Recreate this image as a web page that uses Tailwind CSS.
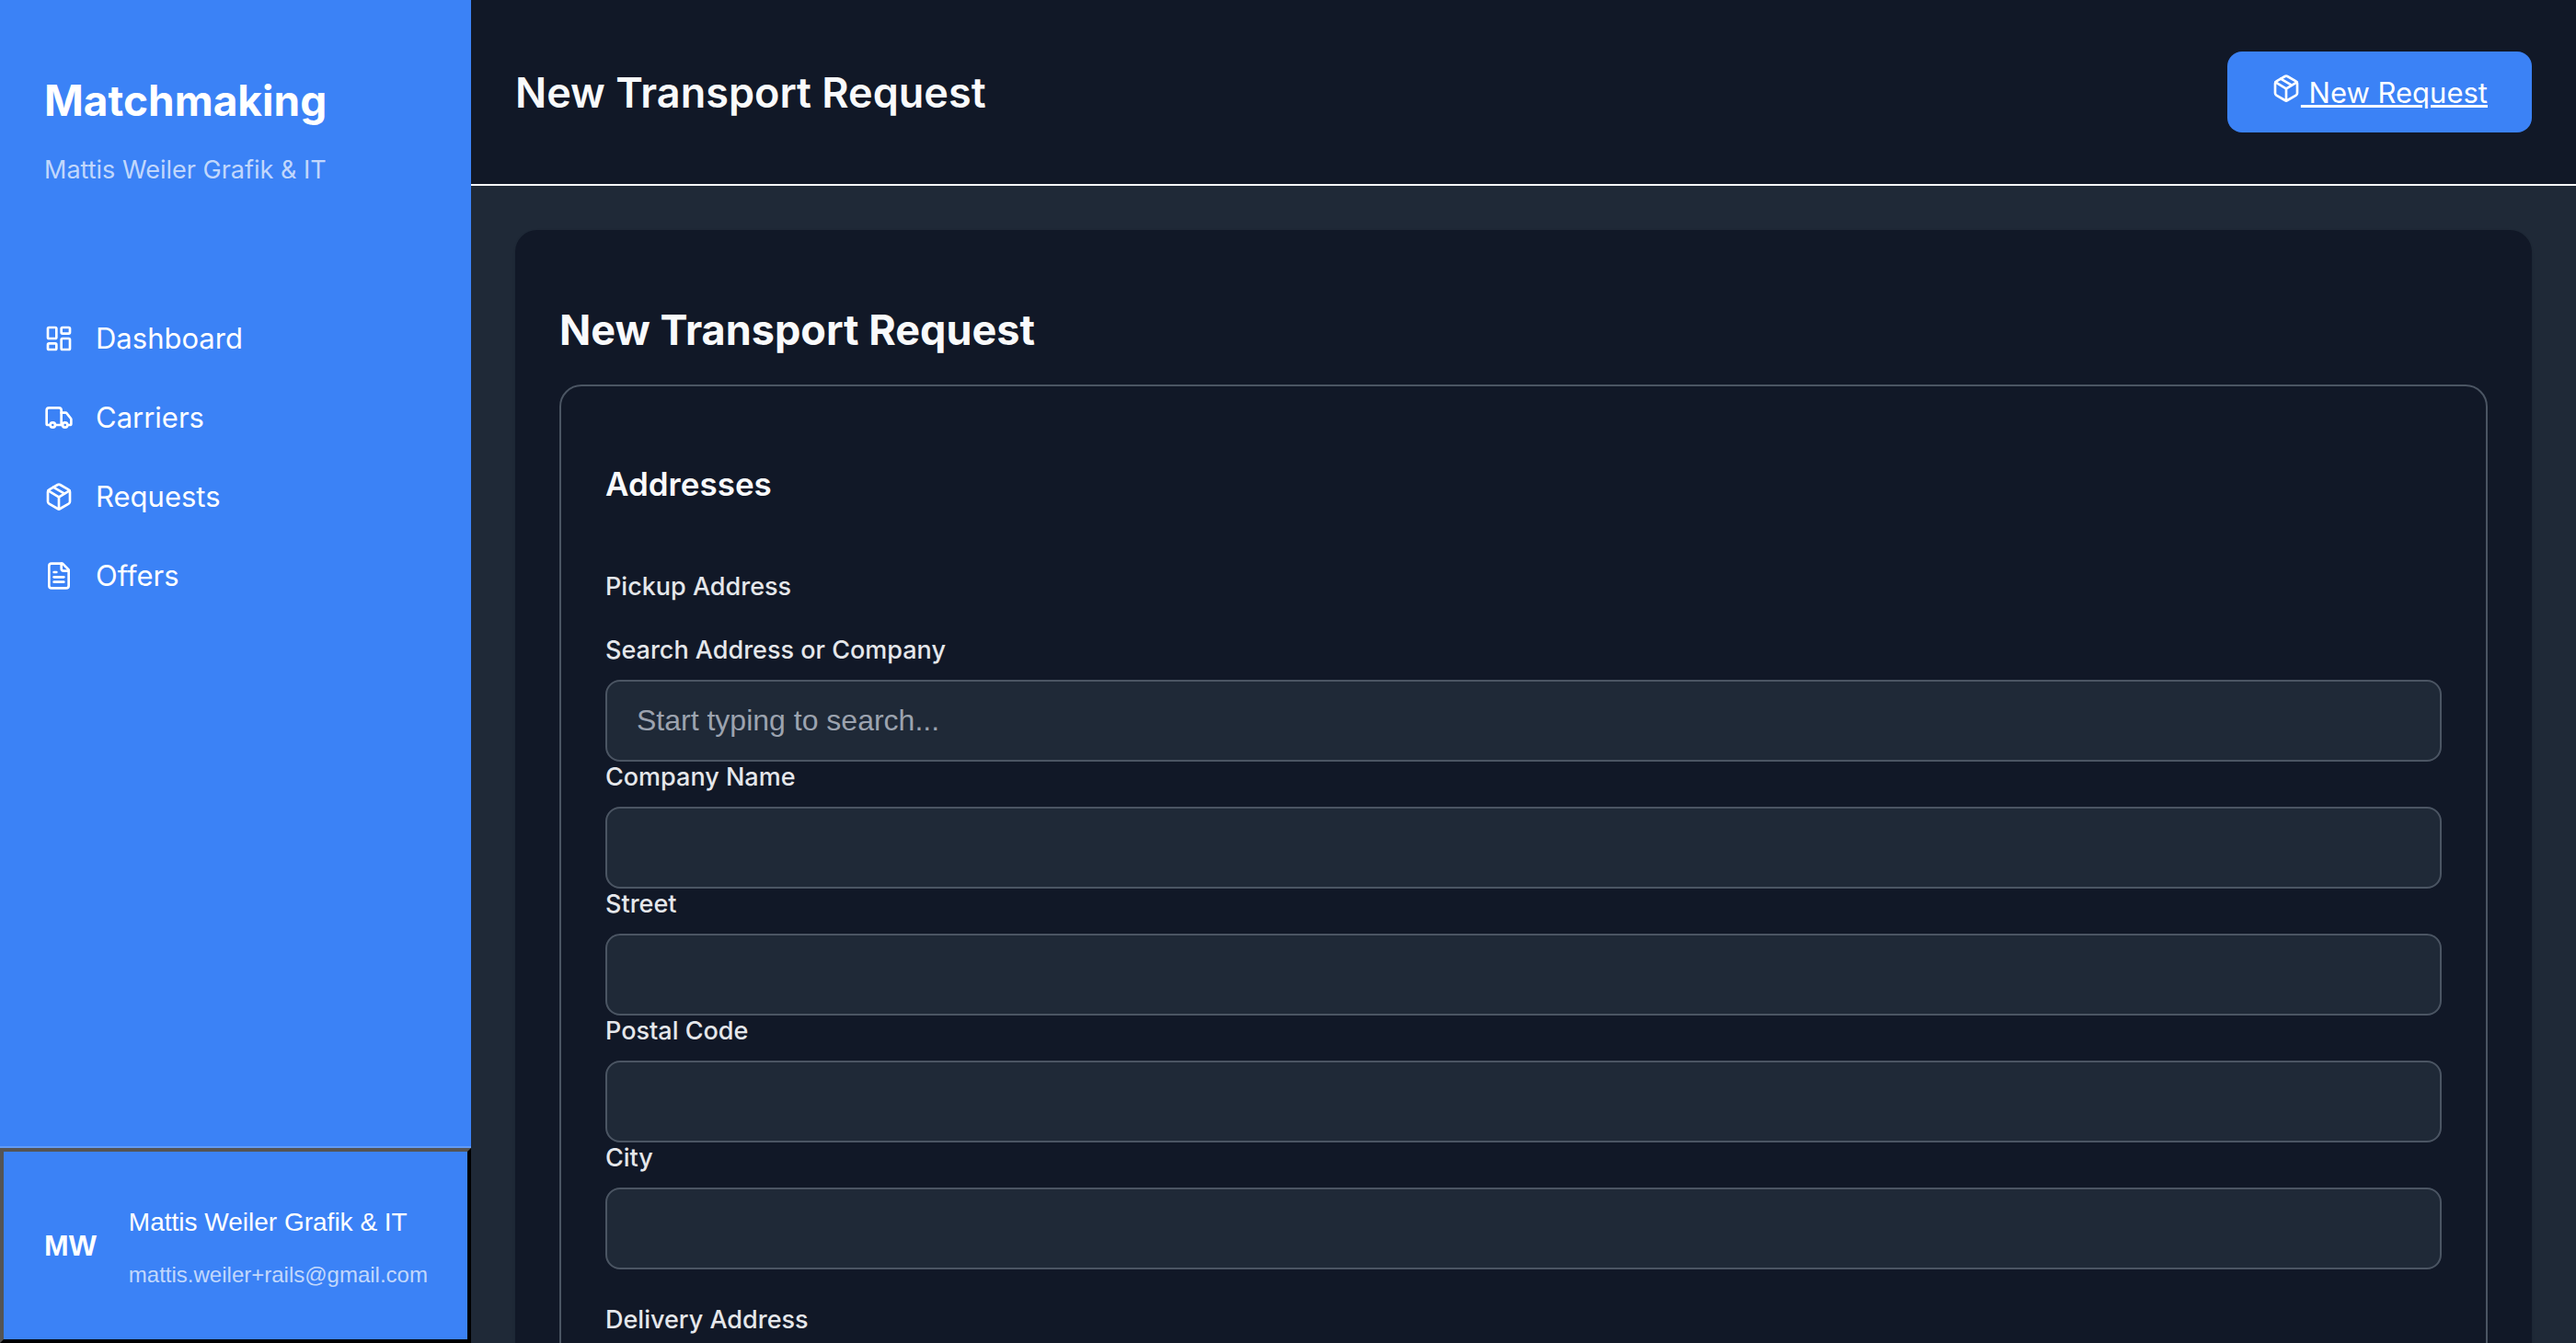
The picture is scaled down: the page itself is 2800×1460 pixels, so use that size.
<!DOCTYPE html>
<html lang="en">
<head>
<meta charset="utf-8">
<title>New Transport Request</title>
<script src="https://cdn.jsdelivr.net/npm/@tailwindcss/browser@4"></script>
</head>
<body class="flex h-screen overflow-hidden bg-[#1f2937] font-['Inter',sans-serif] text-[31px] leading-[38px] text-white">
<svg class="hidden" aria-hidden="true">
  <symbol id="package" viewBox="0 0 24 24"><path d="M11 21.73a2 2 0 0 0 2 0l7-4A2 2 0 0 0 21 16V8a2 2 0 0 0-1-1.73l-7-4a2 2 0 0 0-2 0l-7 4A2 2 0 0 0 3 8v8a2 2 0 0 0 1 1.73z"/><path d="M12 22V12"/><path d="m3.3 7 7.7 4.73a2 2 0 0 0 2 0L20.7 7"/><path d="m7.5 4.27 9 5.15"/></symbol>
</svg>

<aside class="flex w-[512px] shrink-0 flex-col bg-[#3b82f6]">
  <div class="flex flex-col gap-[25px] px-12 pt-20">
    <div class="text-[46px] leading-[58px] font-bold">Matchmaking</div>
    <p class="text-[27px] leading-[44px] text-white/70">Mattis Weiler Grafik &amp; IT</p>
  </div>
  <nav class="mt-[118px] flex flex-col px-12">
    <a href="#" class="flex h-[86px] items-center gap-6">
      <svg class="size-8" viewBox="0 0 24 24" fill="none" stroke="currentColor" stroke-width="2" stroke-linecap="round" stroke-linejoin="round"><rect width="7" height="9" x="3" y="3" rx="1"/><rect width="7" height="5" x="14" y="3" rx="1"/><rect width="7" height="9" x="14" y="12" rx="1"/><rect width="7" height="5" x="3" y="16" rx="1"/></svg>
      Dashboard
    </a>
    <a href="#" class="flex h-[86px] items-center gap-6">
      <svg class="size-8" viewBox="0 0 24 24" fill="none" stroke="currentColor" stroke-width="2" stroke-linecap="round" stroke-linejoin="round"><path d="M14 18V6a2 2 0 0 0-2-2H4a2 2 0 0 0-2 2v11a1 1 0 0 0 1 1h2"/><path d="M15 18H9"/><path d="M19 18h2a1 1 0 0 0 1-1v-3.65a1 1 0 0 0-.22-.624l-3.48-4.35A1 1 0 0 0 17.52 8H14"/><circle cx="17" cy="18" r="2"/><circle cx="7" cy="18" r="2"/></svg>
      Carriers
    </a>
    <a href="#" class="flex h-[86px] items-center gap-6">
      <svg class="size-8" fill="none" stroke="currentColor" stroke-width="2" stroke-linecap="round" stroke-linejoin="round"><use href="#package"/></svg>
      Requests
    </a>
    <a href="#" class="flex h-[86px] items-center gap-6">
      <svg class="size-8" viewBox="0 0 24 24" fill="none" stroke="currentColor" stroke-width="2" stroke-linecap="round" stroke-linejoin="round"><path d="M15 2H6a2 2 0 0 0-2 2v16a2 2 0 0 0 2 2h12a2 2 0 0 0 2-2V7Z"/><path d="M14 2v4a2 2 0 0 0 2 2h4"/><path d="M10 9H8"/><path d="M16 13H8"/><path d="M16 17H8"/></svg>
      Offers
    </a>
  </nav>
  <div class="mt-auto border-t-2 border-white/20">
    <button type="button" class="flex h-[212px] w-full items-center gap-[35px] border-4 border-black px-11 text-left font-['Liberation_Sans',sans-serif] text-[32px] [border-style:outset]">
      <span class="font-bold">MW</span>
      <span class="flex flex-col gap-4 pt-[5px]">
        <span class="text-[28px] leading-[41px]">Mattis Weiler Grafik &amp; IT</span>
        <span class="text-[24px] leading-[41px] text-white/70">mattis.weiler+rails@gmail.com</span>
      </span>
    </button>
  </div>
</aside>

<div class="flex min-w-0 flex-1 flex-col">
  <header class="flex h-[202px] shrink-0 items-start justify-between border-b-2 border-[#f9fafb] bg-[#111827] px-12 pt-14">
    <h1 class="mt-4 text-[45px] leading-[58px] font-semibold text-[#f9fafb]">New Transport Request</h1>
    <a href="#" class="rounded-2xl bg-[#3b82f6] px-12 py-6 leading-[39px] underline"><svg class="inline-block size-8 align-baseline" fill="none" stroke="currentColor" stroke-width="2" stroke-linecap="round" stroke-linejoin="round"><use href="#package"/></svg> New Request</a>
  </header>

  <main class="flex-1 overflow-hidden p-12">
    <form class="rounded-3xl bg-[#111827] px-12 pt-20 pb-12 shadow-sm">
      <h2 class="text-[45px] leading-[58px] font-bold text-[#f9fafb]">New Transport Request</h2>
      <section class="mt-[30px] rounded-3xl border-2 border-[#4b5563] px-12 pt-[84px] pb-24">
        <h3 class="text-[35px] leading-[44px] font-semibold text-[#f9fafb]">Addresses</h3>
        <h4 class="mt-[73px] text-[27px] leading-[33px] font-medium text-[#e5e7eb]">Pickup Address</h4>
        <div class="mt-9 flex flex-col text-[27px] leading-[33px] font-medium text-[#e5e7eb]">
          <label for="search" class="mb-4">Search Address or Company</label>
          <input id="search" type="text" placeholder="Start typing to search..." class="h-[89px] w-full rounded-2xl border-2 border-[#4b5563] bg-[#1f2937] px-8 font-['Liberation_Sans',sans-serif] text-[32px] font-normal placeholder:text-[#9ca3af]">
          <label for="company" class="mb-4">Company Name</label>
          <input id="company" type="text" class="h-[89px] w-full rounded-2xl border-2 border-[#4b5563] bg-[#1f2937] px-8 font-['Liberation_Sans',sans-serif] text-[32px] font-normal">
          <label for="street" class="mb-4">Street</label>
          <input id="street" type="text" class="h-[89px] w-full rounded-2xl border-2 border-[#4b5563] bg-[#1f2937] px-8 font-['Liberation_Sans',sans-serif] text-[32px] font-normal">
          <label for="postal" class="mb-4">Postal Code</label>
          <input id="postal" type="text" class="h-[89px] w-full rounded-2xl border-2 border-[#4b5563] bg-[#1f2937] px-8 font-['Liberation_Sans',sans-serif] text-[32px] font-normal">
          <label for="city" class="mb-4">City</label>
          <input id="city" type="text" class="h-[89px] w-full rounded-2xl border-2 border-[#4b5563] bg-[#1f2937] px-8 font-['Liberation_Sans',sans-serif] text-[32px] font-normal">
        </div>
        <h4 class="mt-[38px] text-[27px] leading-[33px] font-medium text-[#e5e7eb]">Delivery Address</h4>
      </section>
    </form>
  </main>
</div>
</body>
</html>
